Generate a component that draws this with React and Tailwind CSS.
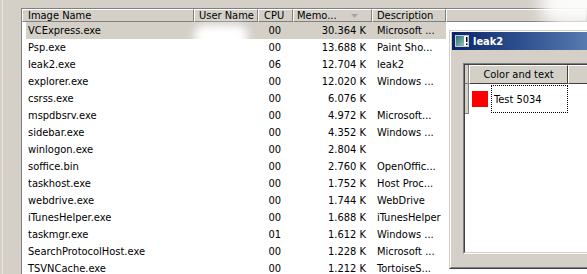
import React from 'react';

const rows = [
  ['VCExpress.exe', '00', '30.364 K', 'Microsoft ...'],
  ['Psp.exe', '00', '13.688 K', 'Paint Sho...'],
  ['leak2.exe', '06', '12.704 K', 'leak2'],
  ['explorer.exe', '00', '12.020 K', 'Windows ...'],
  ['csrss.exe', '00', '6.076 K', ''],
  ['mspdbsrv.exe', '00', '4.972 K', 'Microsoft...'],
  ['sidebar.exe', '00', '4.352 K', 'Windows ...'],
  ['winlogon.exe', '00', '2.804 K', ''],
  ['soffice.bin', '00', '2.760 K', 'OpenOffic...'],
  ['taskhost.exe', '00', '1.752 K', 'Host Proc...'],
  ['webdrive.exe', '00', '1.744 K', 'WebDrive'],
  ['iTunesHelper.exe', '00', '1.688 K', 'iTunesHelper'],
  ['taskmgr.exe', '01', '1.612 K', 'Windows ...'],
  ['SearchProtocolHost.exe', '00', '1.228 K', 'Microsoft ...'],
  ['TSVNCache.exe', '00', '1.212 K', 'TortoiseS...'],
];

const headerCell =
  'h-full flex items-center border-t border-l border-t-white border-l-white border-r border-b border-r-[#808080] border-b-[#808080] bg-[#d4d0c8] whitespace-nowrap overflow-hidden';

function AppIcon() {
  return (
    <svg width="14" height="12" viewBox="0 0 14 12" aria-hidden>
      <rect x="0.5" y="0.5" width="13" height="11" fill="#ffffff" stroke="#c8c8c8" />
      <defs>
        <linearGradient id="tealg" x1="0" y1="0" x2="1" y2="1">
          <stop offset="0" stopColor="#2f6f70" />
          <stop offset="1" stopColor="#8fc4bd" />
        </linearGradient>
      </defs>
      <rect x="1" y="1" width="8" height="10" fill="url(#tealg)" />
      <rect x="11" y="2" width="1.5" height="5" fill="#000" />
      <rect x="11" y="8.5" width="1.5" height="1.5" fill="#000" />
    </svg>
  );
}

function ProcessList() {
  return (
    <div className="flex-1 flex flex-col border-t border-l border-[#808080] bg-white">
      <div className="h-[18px] flex text-black">
        <div className={`${headerCell} w-[172px] pl-[5px]`}>Image Name</div>
        <div className={`${headerCell} w-[64px] pl-[4px]`}>User Name</div>
        <div className={`${headerCell} w-[35px] pl-[5px]`}>CPU</div>
        <div className={`${headerCell} w-[79px] pl-[3px] gap-[14px]`}>
          <span>Memo...</span>
          <svg width="7" height="4" viewBox="0 0 7 4" aria-hidden>
            <path d="M0 0 L7 0 L3.5 4 Z" fill="#a7a6a0" />
          </svg>
        </div>
        <div className={`${headerCell} w-[74px] pl-[4px]`}>Description</div>
        <div className={`${headerCell} flex-1`} />
      </div>
      <div className="flex flex-col pl-[4px]">
        {rows.map((r, i) => (
          <div
            key={r[0]}
            className={`h-[17px] w-[420px] grid grid-cols-[168px_64px_35px_79px_74px] items-center ${
              i === 0 ? 'bg-[#d4d0c8]' : ''
            }`}
          >
            <span className="pl-[2px] whitespace-nowrap">{r[0]}</span>
            <span />
            <span className="text-right pr-[12px]">{r[1]}</span>
            <span className="text-right pr-[6px] whitespace-nowrap">{r[2]}</span>
            <span className="pl-[5px] whitespace-nowrap overflow-hidden">{r[3]}</span>
          </div>
        ))}
      </div>
    </div>
  );
}

function Leak2Window() {
  return (
    <div className="absolute left-[449px] top-[30px] w-[260px] h-[239px] border border-t-[#d4d0c8] border-l-[#d4d0c8] border-r-[#404040] border-b-[#404040]">
      <div className="h-full flex flex-col border border-t-white border-l-white border-r-[#808080] border-b-[#808080] bg-[#d4d0c8] px-[1px]">
        <div className="h-[18px] flex items-center gap-[4px] pl-[3px] bg-gradient-to-r from-[#0a246a] to-[#a6caf0]">
          <AppIcon />
          <span className="text-white font-bold">leak2</span>
        </div>
        <div className="flex-1 flex flex-col pl-[11px] pt-[13px] pb-[13px]">
          <div className="flex-1 flex flex-col border border-t-[#808080] border-l-[#808080] border-r-white border-b-white">
            <div className="flex-1 flex flex-col border border-t-[#404040] border-l-[#404040] border-r-[#d4d0c8] border-b-[#d4d0c8] bg-white">
              <div className="h-[19px] flex">
                <div className="w-[4px] bg-[#d4d0c8] border-r border-b border-[#808080]" />
                <div className="w-[99px] flex items-center justify-center bg-[#d4d0c8] border-t border-l border-t-white border-l-white border-r border-b border-r-[#404040] border-b-[#404040]">
                  Color and text
                </div>
                <div className="flex-1 bg-[#d4d0c8] border-t border-l border-t-white border-l-white border-b border-b-[#404040]" />
              </div>
              <div className="h-[30px] flex">
                <div className="w-[4px] bg-[#d4d0c8] border-r border-b border-[#808080]" />
                <div className="w-[99px] flex items-center">
                  <div className="w-[16px] h-[16px] bg-[#ff0000] ml-[3px]" />
                  <div className="ml-[3px] h-[28px] flex-1 flex items-center pl-[2px] border border-dotted border-black">
                    Test 5034
                  </div>
                </div>
              </div>
            </div>
          </div>
        </div>
      </div>
    </div>
  );
}

export default function App() {
  return (
    <div
      className="relative w-[587px] h-[274px] overflow-hidden bg-[#d4d0c8] text-[11px] leading-none text-black flex pt-[8px] pl-[21px]"
      style={{ fontFamily: '"DejaVu Sans Condensed", "Liberation Sans", sans-serif' }}
    >
      <div className="absolute left-[2px] top-0 bottom-0 w-px bg-[#e8e6e1]" />
      <ProcessList />
      <div className="absolute left-[194px] top-[25px] w-[54px] h-[22px] rounded-full bg-white blur-[4px]" />
      <div className="absolute left-[540px] top-[-16px] w-[80px] h-[42px] rounded-full bg-white/90 blur-[8px]" />
      <Leak2Window />
    </div>
  );
}
